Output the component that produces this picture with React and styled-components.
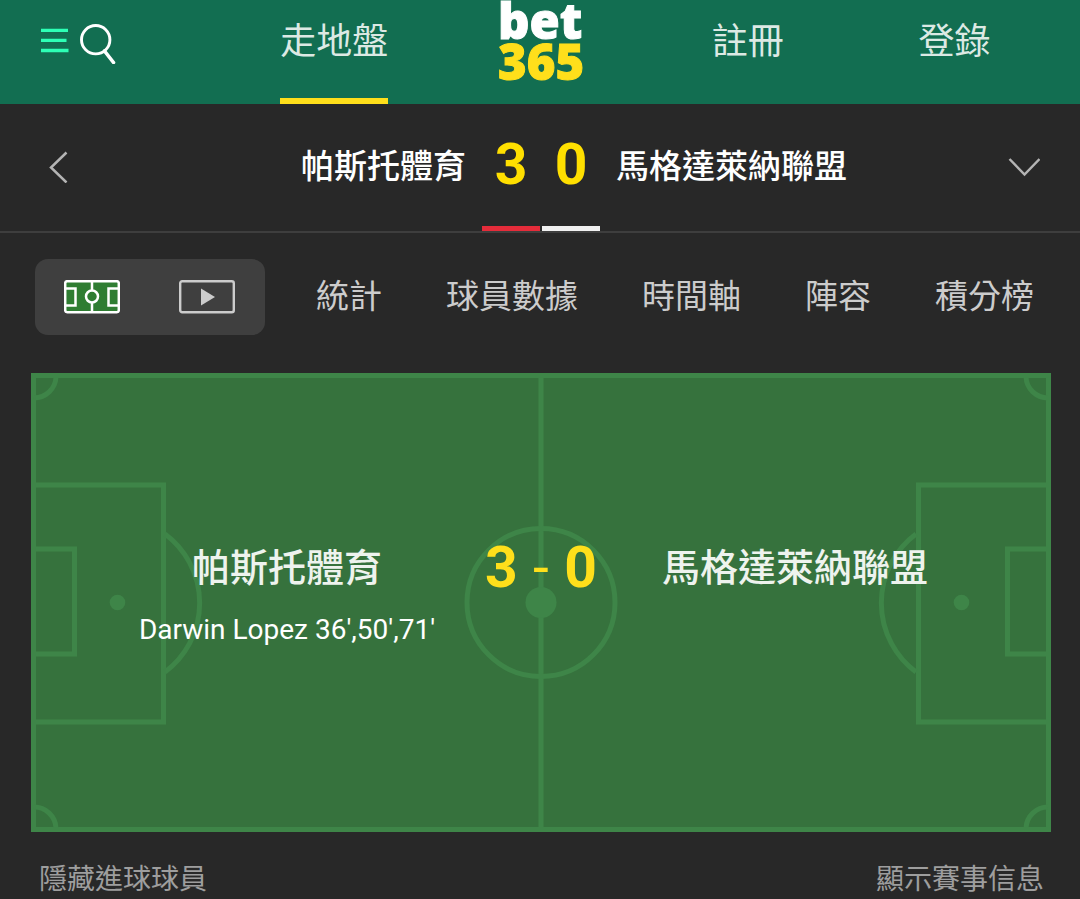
import React, { useState } from "react";
import styled, { createGlobalStyle } from "styled-components";

const GlobalStyle = createGlobalStyle`
  * {
    box-sizing: border-box;
  }

  body {
    margin: 0;
    background: #282828;
    font-family: Roboto, "Noto Sans CJK TC", sans-serif;
    overflow-x: hidden;
  }

  button {
    padding: 0;
    border: 0;
    background: none;
    color: inherit;
    font: inherit;
    cursor: pointer;
  }

  svg {
    display: block;
  }
`;

// 頂部導覽
const Header = styled.header`
  display: flex;
  height: 104px;
  padding: 0 22px 0 40px;
  background: #126e51;
`;

const HeaderTools = styled.div`
  display: flex;
  align-items: flex-start;
  gap: 11px;
  width: 191px;
  padding-top: 24px;
`;

const HeaderNav = styled.nav`
  flex: 1;
  display: grid;
  grid-template-columns: repeat(4, 1fr);
  justify-items: center;
`;

const NavLink = styled.a`
  height: 104px;
  border-bottom: 6px solid ${({ $active }) => ($active ? "#ffdf1b" : "transparent")};
  color: #dce9e4;
  font-size: 36px;
  line-height: 84px;
  text-decoration: none;
  white-space: nowrap;
`;

const Logo = styled.a`
  display: flex;
  flex-direction: column;
  font-family: "Open Sans", sans-serif;
  font-weight: 800;
  font-size: 49px;
  line-height: 41px;
  text-decoration: none;
`;

const LogoWord = styled.span`
  color: ${({ $color }) => $color};
  -webkit-text-stroke: 1px ${({ $color }) => $color};
`;

// 比分列
const MatchBar = styled.section`
  display: grid;
  grid-template-columns: 1fr auto 1fr;
  gap: 16px;
  height: 129px;
  padding: 0 40px 0 42px;
  border-bottom: 2px solid #3e3e3e;
`;

const BarSide = styled.div`
  display: flex;
  align-items: center;
  justify-content: space-between;
  padding-bottom: 2px;
  color: #fff;
  font-size: 33px;
  font-weight: 500;
  line-height: 48px;
  white-space: nowrap;
`;

const BarScores = styled.div`
  display: flex;
  gap: 2px;
`;

const BarScore = styled.span`
  width: 58px;
  border-bottom: 5px solid ${({ $kit }) => $kit};
  color: #ffdf00;
  font-size: 57px;
  font-weight: 700;
  line-height: 122px;
  text-align: center;
`;

// 分頁
const TabBar = styled.nav`
  display: flex;
  align-items: center;
  gap: 51px;
  padding: 26px 46px 38px 35px;
`;

const ViewToggle = styled.div`
  display: flex;
  width: 230px;
  height: 76px;
  padding: 0 1px 1px 0;
  border-radius: 13px;
  background: #3f3f3f;
`;

const ViewButton = styled.button`
  flex: 1;
  display: flex;
  align-items: center;
  justify-content: center;
`;

const Tabs = styled.div`
  flex: 1;
  display: flex;
  justify-content: space-between;
`;

const Tab = styled.button`
  color: #ccc;
  font-size: 33px;
  line-height: 48px;
  white-space: nowrap;
`;

// 球場
const Pitch = styled.section`
  display: grid;
  margin: 0 29px 0 31px;

  > * {
    grid-area: 1 / 1;
  }
`;

const PitchDrawing = styled.svg`
  width: 100%;
  height: auto;
`;

const PitchInfo = styled.div`
  z-index: 1;
  display: grid;
  grid-template-columns: 1fr 120px 1fr;
  align-content: start;
  align-items: start;
  padding: 165px 62px 0;
  text-align: center;
`;

const TeamName = styled.h2`
  margin: 0;
  color: #eef3ee;
  font-size: 38px;
  font-weight: 500;
  line-height: 60px;
  white-space: nowrap;
`;

const Scorer = styled.p`
  margin: 12px 0 0;
  color: #fff;
  font-size: 28px;
  line-height: 40px;
  white-space: nowrap;
`;

const PitchScore = styled.div`
  display: flex;
  justify-content: space-between;
  align-items: center;
  padding: 0 4px;
  color: #ffdf1b;
  font-size: 57px;
  font-weight: 700;
  line-height: 60px;
`;

const Dash = styled.span`
  font-weight: 400;
`;

const PitchFooter = styled.footer`
  display: flex;
  justify-content: space-between;
  padding: 28px 36px 0 39px;
`;

const FooterButton = styled.button`
  color: #9e9e9e;
  font-size: 28px;
  line-height: 39px;
`;

function MenuIcon() {
  return (
    <svg width="29" height="40" viewBox="0 0 29 40" stroke="#2dffb5" strokeWidth="3.300">
      <path d="M1 6.300h27M1 16.400h25.500M1 26.500h27.500" />
    </svg>
  );
}

function SearchIcon() {
  return (
    <svg width="36" height="40" viewBox="0 0 36 40" fill="none" stroke="#fff">
      <circle cx="15.700" cy="15.700" r="14.200" strokeWidth="2.900" />
      <path d="M24.500 27l9 11.500" strokeWidth="3.600" strokeLinecap="round" />
    </svg>
  );
}

function BackIcon() {
  return (
    <svg width="26" height="32" viewBox="0 0 26 32" fill="none" stroke="#b4b4b4" strokeWidth="2.500">
      <path d="M24.500 1.500L9 16.500l15.500 15" />
    </svg>
  );
}

function DownIcon() {
  return (
    <svg width="32" height="20" viewBox="0 0 32 20" fill="none" stroke="#b4b4b4" strokeWidth="2.500">
      <path d="M1.500 2L16.500 17.500L31.500 2" />
    </svg>
  );
}

function PitchIcon() {
  return (
    <svg width="56" height="34" viewBox="0 0 56 34" fill="none" stroke="#fff" strokeWidth="2.500">
      <rect x="1.200" y="1.200" width="53.600" height="31.100" rx="2" fill="#2f7d32" />
      <path d="M28 1v9.500M28 23v9.500M1 8.500h10.500v17H1M55 8.500H44.500v17H55" />
      <circle cx="28" cy="16.500" r="6" />
    </svg>
  );
}

function VideoIcon() {
  return (
    <svg width="56" height="34" viewBox="0 0 56 34" fill="none">
      <rect x="1.200" y="1.200" width="53.600" height="31.100" rx="2" stroke="#ccc" strokeWidth="2.400" />
      <path d="M22 8.500v17L36 17z" fill="#ccc" />
    </svg>
  );
}

function PitchLines() {
  return (
    <PitchDrawing viewBox="0 0 1020 459" fill="none" stroke="#3e8548" strokeWidth="5" aria-hidden="true">
      <rect x="2.500" y="2.500" width="1015" height="454" fill="#36723d" />
      <path d="M510 0v459" />
      <circle cx="510" cy="229.500" r="74" />
      <circle cx="510" cy="229.500" r="15.500" fill="#3e8548" stroke="none" />
      <path d="M3 112h129.500v237H3M3 176h40.500v105H3" />
      <path d="M1017 112H887.500v237H1017M1017 176H976.500v105H1017" />
      <path d="M134 161a86 86 0 0 1 0 138M885 161a86 86 0 0 0 0 138" />
      <circle cx="86.500" cy="229.500" r="7.800" fill="#3e8548" stroke="none" />
      <circle cx="930.500" cy="229.500" r="7.800" fill="#3e8548" stroke="none" />
      <path d="M25 4a22 22 0 0 1-22 21M995 4a22 22 0 0 0 22 21M25 455a22 22 0 0 0-22-21M995 455a22 22 0 0 1 22-21" />
    </PitchDrawing>
  );
}

const home = { name: "帕斯托體育", score: 3, kit: "#e52c3a", scorers: "Darwin Lopez 36',50',71'" };
const away = { name: "馬格達萊納聯盟", score: 0, kit: "#f0f0f0" };

const tabs = ["統計", "球員數據", "時間軸", "陣容", "積分榜"];

function App() {
  const [view, setView] = useState("pitch");

  return (
    <>
      <GlobalStyle />
      <Header>
        <HeaderTools>
          <button type="button" aria-label="選單">
            <MenuIcon />
          </button>
          <button type="button" aria-label="搜尋">
            <SearchIcon />
          </button>
        </HeaderTools>
        <HeaderNav>
          <NavLink href="#inplay" $active>
            走地盤
          </NavLink>
          <Logo href="#home">
            <LogoWord $color="#fff">bet</LogoWord>
            <LogoWord $color="#ffdf1b">365</LogoWord>
          </Logo>
          <NavLink href="#join">註冊</NavLink>
          <NavLink href="#login">登錄</NavLink>
        </HeaderNav>
      </Header>

      <MatchBar>
        <BarSide>
          <button type="button" aria-label="返回">
            <BackIcon />
          </button>
          <span>{home.name}</span>
        </BarSide>
        <BarScores>
          <BarScore $kit={home.kit}>{home.score}</BarScore>
          <BarScore $kit={away.kit}>{away.score}</BarScore>
        </BarScores>
        <BarSide>
          <span>{away.name}</span>
          <button type="button" aria-label="展開">
            <DownIcon />
          </button>
        </BarSide>
      </MatchBar>

      <TabBar>
        <ViewToggle>
          <ViewButton
            type="button"
            aria-label="球場"
            aria-pressed={view === "pitch"}
            onClick={() => setView("pitch")}
          >
            <PitchIcon />
          </ViewButton>
          <ViewButton
            type="button"
            aria-label="影片"
            aria-pressed={view === "video"}
            onClick={() => setView("video")}
          >
            <VideoIcon />
          </ViewButton>
        </ViewToggle>
        <Tabs>
          {tabs.map((tab) => (
            <Tab key={tab} type="button">
              {tab}
            </Tab>
          ))}
        </Tabs>
      </TabBar>

      <Pitch>
        <PitchLines />
        <PitchInfo>
          <div>
            <TeamName>{home.name}</TeamName>
            <Scorer>{home.scorers}</Scorer>
          </div>
          <PitchScore>
            <span>{home.score}</span>
            <Dash>-</Dash>
            <span>{away.score}</span>
          </PitchScore>
          <div>
            <TeamName>{away.name}</TeamName>
          </div>
        </PitchInfo>
      </Pitch>

      <PitchFooter>
        <FooterButton type="button">隱藏進球球員</FooterButton>
        <FooterButton type="button">顯示賽事信息</FooterButton>
      </PitchFooter>
    </>
  );
}

export default App;
